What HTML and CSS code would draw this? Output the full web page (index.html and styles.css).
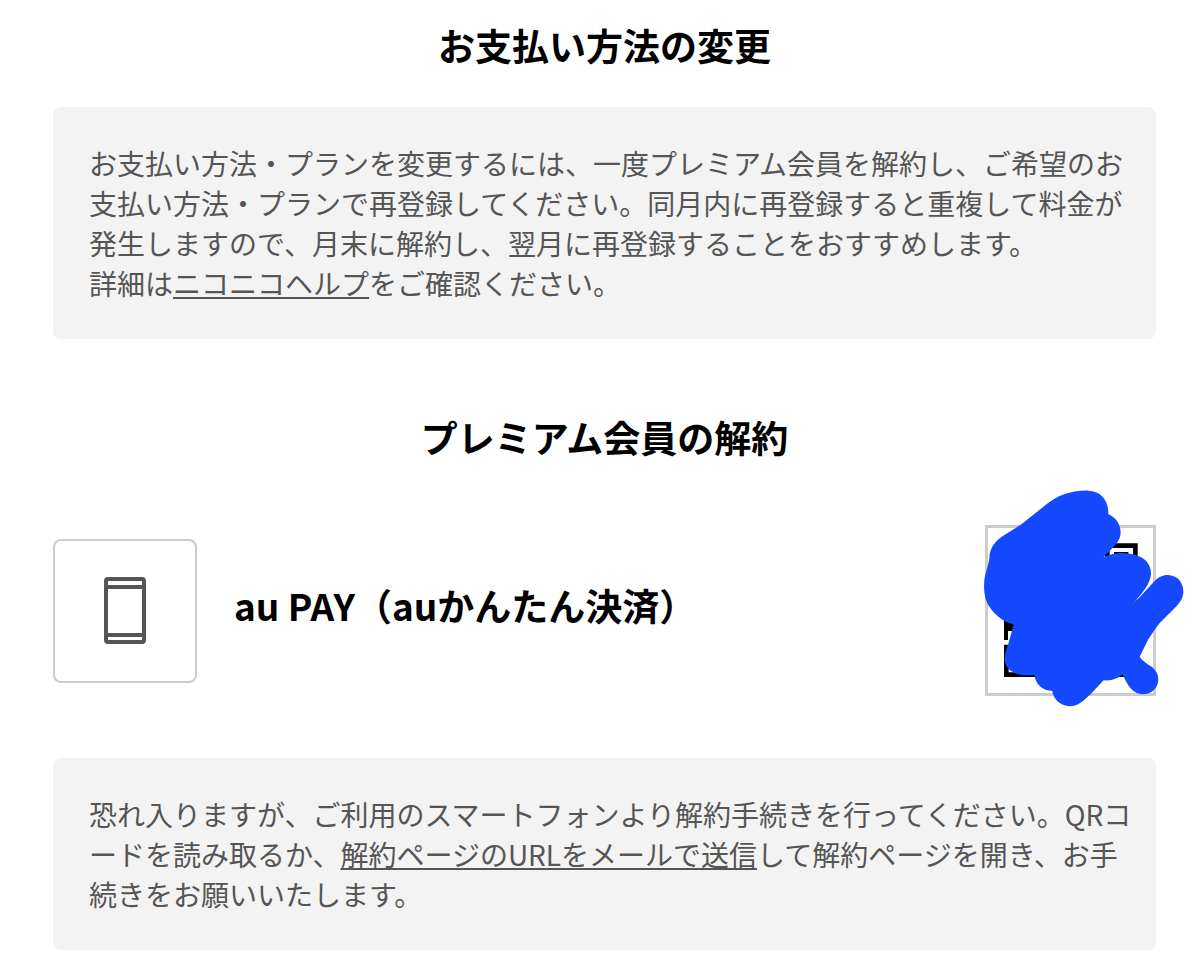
FILE: index.html
```
<!DOCTYPE html>
<html lang="ja">

<head>
    <meta charset="UTF-8">
    <meta name="viewport" content="width=device-width, initial-scale=1.0">
    <title>お支払い方法の変更</title>
    <link rel="stylesheet" href="styles.css">
</head>

<body>
    <main>
        <section>
            <h2>お支払い方法の変更</h2>
            <p class="note">お支払い方法・プランを変更するには、一度プレミアム会員を解約し、ご希望のお支払い方法・プランで再登録してください。同月内に再登録すると重複して料金が発生しますので、月末に解約し、翌月に再登録することをおすすめします。<br>詳細は<a href="#help">ニコニコヘルプ</a>をご確認ください。</p>
        </section>

        <section class="cancel">
            <h2>プレミアム会員の解約</h2>
            <div class="payment">
                <div class="payment-icon">
                    <svg width="42" height="67" viewBox="0 0 42 67" aria-hidden="true">
                        <rect class="phone" x="2" y="2" width="38" height="63" rx="2" />
                        <path class="phone" d="M2 10H40M2 58H40" />
                    </svg>
                </div>
                <h3>au PAY（auかんたん決済）</h3>
                <div class="qr">
                    <svg class="qr-mask" width="230" height="240" viewBox="0 0 690 720" aria-hidden="true">
                        <!-- QR -->
                        <path d="M405 190H503V290H405ZM419 204V276H489V204ZM432 216H475V262H432Z" fill-rule="evenodd" />
                        <path d="M102 420H140V480H102ZM102 494H200V591H102ZM116 508V577H186V508ZM440 570H470V591H440Z" fill-rule="evenodd" />
                        <path class="qr-gap" d="M114 453H130V480H114Z" />
                        <!-- 塗りつぶし -->
                        <path class="paint" d="M58 235C58 210 69 192 87 176C108 160 132 148 154 133L222 79C242 63 259 51 282 43C305 36 328 31 355 32C391 33 416 58 415 103C437 112 452 132 452 158C451 184 435 196 400 232C430 218 453 217 479 221C518 226 544 248 543 282C541 310 521 334 502 356L482 381L556 301C569 289 579 285 594 285C621 286 640 306 640 334C640 354 631 367 618 380L570 428C555 446 546 461 535 478L509 530C516 541 529 550 543 559C557 569 565 582 565 600C563 625 545 643 518 643C489 642 474 620 458 583C441 597 425 603 401 601L363 641C343 659 326 679 299 679C270 677 250 657 247 633C218 631 197 614 193 584C171 588 149 586 130 577C111 568 103 551 104 531C106 512 116 493 120 474L131 433C96 424 72 402 56 377C42 353 41 323 43 301C46 277 54 262 58 235Z" />
                        <path d="M484 379L504 358" stroke="#15388c" stroke-width="3" />
                    </svg>
                </div>
            </div>
            <p class="note">恐れ入りますが、ご利用のスマートフォンより解約手続きを行ってください。QRコードを読み取るか、<a href="#mail">解約ページのURLをメールで送信</a>して解約ページを開き、お手続きをお願いいたします。</p>
        </section>
    </main>
</body>

</html>
```
FILE: styles.css
```
* {
    box-sizing: border-box;
}

body {
    margin: 0;
    background-color: #fff;
    color: #000;
    font-family: "Noto Sans CJK JP", sans-serif;
}

main {
    padding: 17px 44px 20px 53px;
}

h2 {
    margin: 0 0 34px;
    font-size: 37px;
    line-height: 56px;
    font-weight: bold;
    text-align: center;
}

.note {
    margin: 0;
    padding: 36px 20px 36px 36px;
    border-radius: 8px;
    background-color: #f3f3f3;
    color: #555;
    font-size: 28px;
    line-height: 40px;
}

.note a {
    color: #555;
    text-decoration: underline;
    text-decoration-thickness: 2px;
    text-underline-offset: 2px;
    text-decoration-skip-ink: none;
}

.cancel {
    margin-top: 70px;
}

.cancel h2 {
    margin-bottom: 60px;
}

.payment {
    display: flex;
    align-items: center;
    margin-bottom: 62px;
}

.payment-icon {
    display: flex;
    align-items: center;
    justify-content: center;
    width: 144px;
    height: 144px;
    border: 2px solid #ccc;
    border-radius: 8px;
}

.phone {
    fill: none;
    stroke: #555;
    stroke-width: 4;
}

.payment h3 {
    flex: 1;
    margin: 0 0 12px 37px;
    font-size: 37px;
    line-height: 56px;
    font-weight: bold;
}

.qr {
    position: relative;
    width: 171px;
    height: 171px;
    border: 3px solid #ccc;
}

/* はみ出して重ねる */
.qr-mask {
    position: absolute;
    top: -48px;
    left: -18px;
}

.qr-gap {
    fill: #fff;
}

.paint {
    fill: #1549ff;
}
```
